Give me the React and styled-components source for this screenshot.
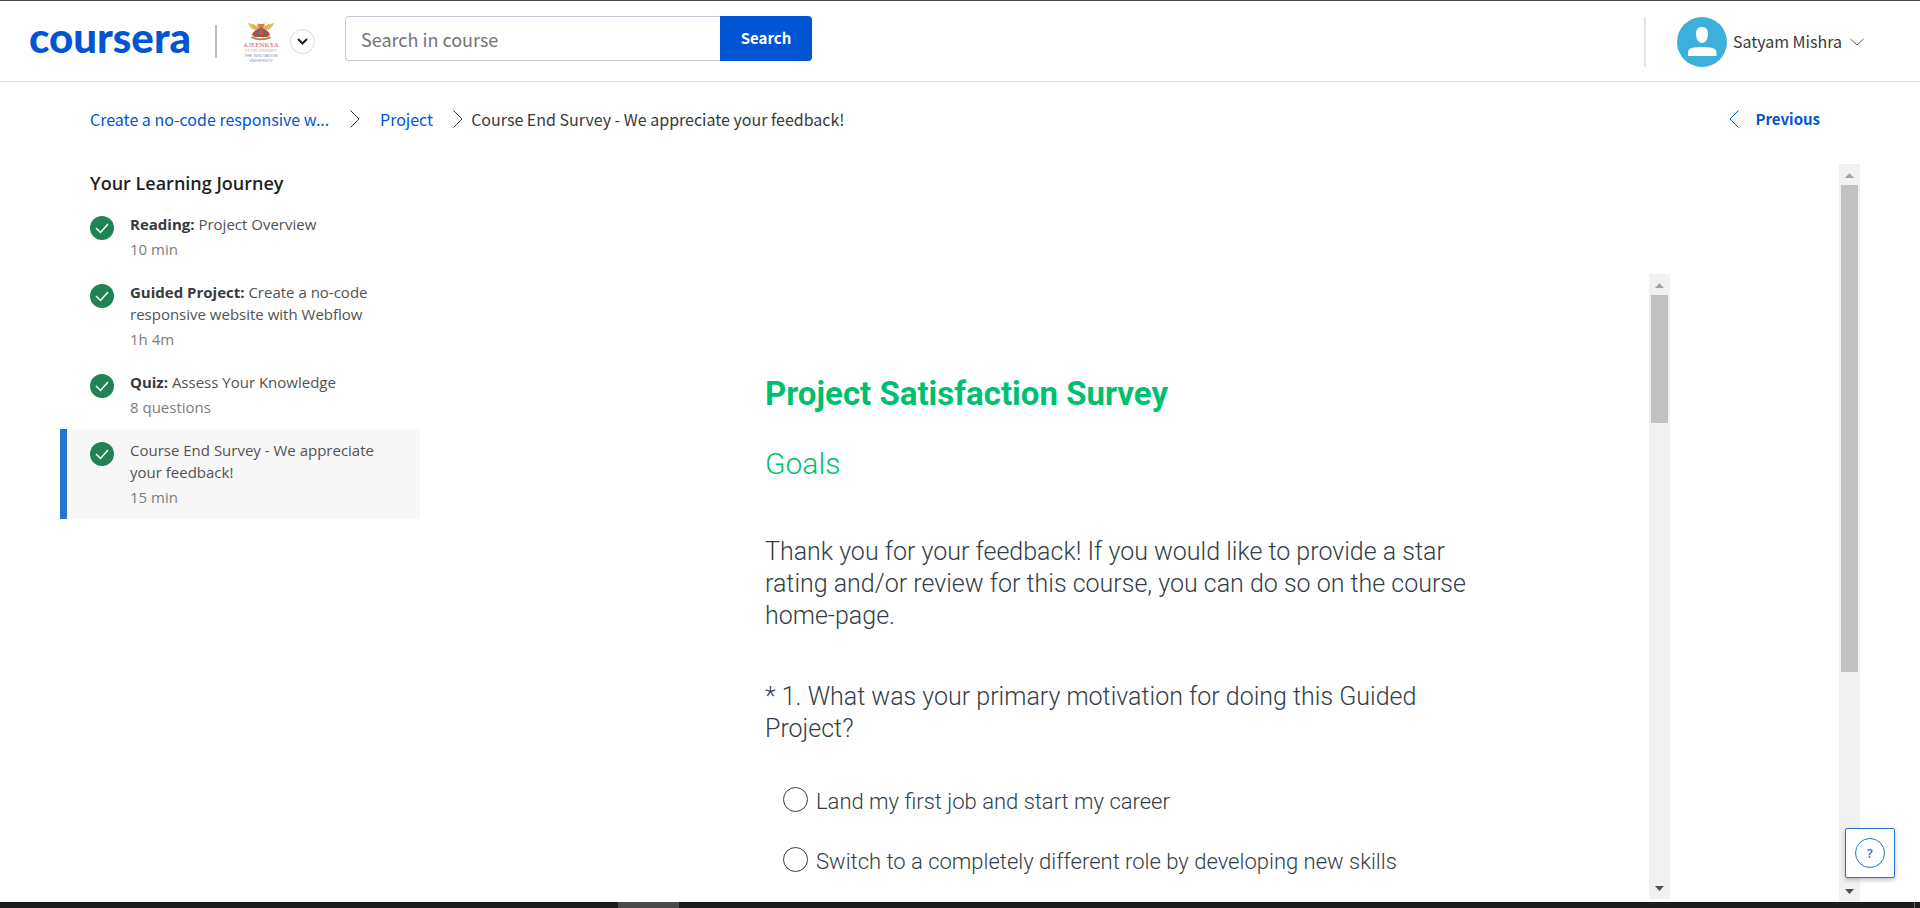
import React from "react";
import styled, { createGlobalStyle } from "styled-components";

const SOURCE = '"Noto Sans CJK SC", "Noto Sans", sans-serif';
const OPEN = '"Open Sans", "Noto Sans", sans-serif';
const SURVEY = 'Roboto, "Liberation Sans", sans-serif';

const GlobalStyle = createGlobalStyle`
  *, *::before, *::after { box-sizing: border-box; }
  body { margin: 0; background: #fff; font-family: ${SOURCE}; color: #373a3c; }
  h1, h2, h3, p, ul, ol, fieldset { margin: 0; padding: 0; border: 0; }
  ul, ol { list-style: none; }
  a { text-decoration: none; color: inherit; }
  button, input { font: inherit; }
`;

const Page = styled.div`
  display: flex;
  flex-direction: column;
  height: 100vh;
  overflow: hidden;
  border-top: 1px solid #48484a;
`;

const Header = styled.header`
  display: flex;
  flex: none;
  height: 81px;
  padding: 0 56px 0 29px;
  border-bottom: 1px solid #dfe0e1;
`;

const Brand = styled.a`
  align-self: flex-start;
  width: 160px;
  margin: 12px 26px 0 0;
  font-family: Lato, sans-serif;
  font-weight: 900;
  font-size: 42px;
  line-height: 48px;
  color: #0056d2;
`;

const Rule = styled.span`
  flex: none;
  width: 2px;
  height: ${(p) => p.$height}px;
  margin-top: ${(p) => p.$top}px;
  background: ${(p) => p.$color};
`;

const Crest = styled.svg`
  flex: none;
  width: 36px;
  height: 42px;
  margin: 20px 0 0 26px;
`;

const RoundButton = styled.button`
  display: flex;
  align-items: center;
  justify-content: center;
  flex: none;
  width: 25px;
  height: 25px;
  margin: 28px 0 0 11px;
  padding: 0;
  border: 1px solid #dadada;
  border-radius: 50%;
  background: #fff;
`;

const SearchForm = styled.form`
  display: flex;
  flex: none;
  width: 467px;
  height: 45px;
  margin: 15px auto 0 30px;
`;

const SearchInput = styled.input`
  flex: 1;
  min-width: 0;
  padding: 0 15px;
  border: 1px solid #c7cbd8;
  border-right: 0;
  border-radius: 4px 0 0 4px;
  font-size: 18px;
  outline: 0;
  &::placeholder { color: #757575; opacity: 1; }
`;

const SearchButton = styled.button`
  width: 92px;
  padding: 0 0 3px;
  border: 0;
  border-radius: 0 4px 4px 0;
  background: #0056d2;
  color: #fff;
  font-weight: 700;
  font-size: 15px;
`;

const UserMenu = styled.button`
  display: flex;
  align-items: center;
  height: 50px;
  margin: 16px 0 0 31px;
  padding: 0;
  border: 0;
  background: none;
  color: #373a3c;
  font-size: 16px;
  line-height: 24px;
`;

const UserName = styled.span`
  margin: 0 8px 2px 6px;
`;

const TopRow = styled.div`
  display: flex;
  flex: none;
  align-items: center;
  justify-content: space-between;
  height: 82px;
  padding: 0 100px 8px 90px;
`;

const Crumbs = styled.ol`
  display: flex;
  align-items: center;
  font-size: 16px;
  line-height: 24px;
`;

const Crumb = styled.li`
  display: flex;
  align-items: center;
`;

const CrumbLink = styled.a`
  min-width: ${(p) => p.$min}px;
  white-space: nowrap;
  color: #0056d2;
`;

const CrumbArrow = styled.svg`
  flex: none;
  width: 10px;
  height: 18px;
  margin: 0 ${(p) => p.$after}px 0 20px;
`;

const PreviousLink = styled.a`
  display: flex;
  align-items: center;
  gap: 16px;
  color: #0056d2;
  font-weight: 700;
  font-size: 15px;
  line-height: 24px;
`;

const Body = styled.div`
  display: flex;
  flex: 1;
  min-height: 0;
  padding: 0 60px;
`;

const Sidebar = styled.nav`
  flex: none;
  width: 360px;
  font-family: ${OPEN};
`;

const SidebarTitle = styled.h2`
  padding: 0 0 1px 30px;
  font-size: 18px;
  font-weight: 600;
  line-height: 38px;
  color: #1f1f1f;
`;

const Step = styled.a`
  display: flex;
  gap: 16px;
  padding: 10px 30px 11px 23px;
  border-left: 7px solid ${(p) => (p.$active ? "#2a73cc" : "transparent")};
  background: ${(p) => (p.$active ? "#f7f7f7" : "transparent")};
  font-size: 15px;
  line-height: 22px;
`;

const StepIcon = styled.svg`
  flex: none;
  width: 24px;
  height: 24px;
  margin-top: 3px;
`;

const StepText = styled.div`
  color: #525252;
  strong { color: #373a3c; font-weight: 700; }
`;

const StepMeta = styled.div`
  margin-top: 3px;
  color: #7d7d7d;
`;

const Main = styled.main`
  display: flex;
  flex: 1;
  min-width: 0;
  padding: 110px 169px 3px;
`;

const Survey = styled.section`
  flex: 1;
  min-width: 0;
  overflow: hidden;
  font-family: ${SURVEY};
  font-weight: 300;
  color: #333e48;
`;

const SurveyInner = styled.div`
  max-width: 708px;
  margin: 0 auto;
  padding-top: 100px;
`;

const SurveyTitle = styled.h1`
  font-size: 33px;
  line-height: 40px;
  font-weight: 700;
  color: #00bf6f;
`;

const SurveySubtitle = styled.h2`
  margin-top: 32px;
  font-size: 30px;
  line-height: 36px;
  font-weight: 300;
  color: #00bf6f;
`;

const Copy = styled.p`
  margin-top: 54px;
  font-size: 25px;
  line-height: 32px;
`;

const Question = styled.fieldset`
  min-width: 0;
  margin-top: 49px;
`;

const Legend = styled.legend`
  padding: 0;
  font-size: 25px;
  line-height: 32px;
`;

const Options = styled.div`
  display: flex;
  flex-direction: column;
  gap: 26px;
  padding: 40px 0 0 18px;
`;

const Option = styled.label`
  display: flex;
  align-items: flex-start;
  gap: 8px;
  font-size: 22px;
  line-height: 34px;
`;

const Radio = styled.input`
  appearance: none;
  flex: none;
  width: 25px;
  height: 25px;
  margin: 2px 0 0;
  border: 1px solid #333e48;
  border-radius: 50%;
  background: #fff;
`;

const Track = styled.div`
  display: flex;
  flex-direction: column;
  flex: none;
  width: 21px;
  background: #f1f1f1;
`;

const TrackEnd = styled.svg`
  flex: none;
  width: 21px;
  height: 21px;
`;

const TrackBody = styled.div`
  flex: 1;
  min-height: 0;
  padding: 0 2px;
`;

const Thumb = styled.div`
  height: ${(p) => p.$size}%;
  background: #c1c1c1;
`;

const HelpButton = styled.button`
  position: fixed;
  right: 25px;
  bottom: 30px;
  display: flex;
  align-items: center;
  justify-content: center;
  width: 50px;
  height: 50px;
  padding: 0;
  border: 1px solid #2a73cc;
  border-radius: 2px;
  background: #fff;
  box-shadow: 0 2px 4px rgba(0, 0, 0, 0.25);
`;

const HelpMark = styled.span`
  width: 30px;
  height: 30px;
  border: 1px solid #2a73cc;
  border-radius: 50%;
  color: #2a73cc;
  font-family: ${OPEN};
  font-weight: 600;
  font-size: 13px;
  line-height: 28px;
`;

const BottomBar = styled.footer`
  display: flex;
  flex: none;
  height: 6px;
  padding: 0 5px 0 618px;
  justify-content: space-between;
  background: #1c1c1c;
`;

const BarTab = styled.span`
  width: 61px;
  background: #4a4a4a;
`;

const BarEdge = styled.span`
  width: 1px;
  background: #6a6a6a;
`;

const steps = [
  { kind: "Reading:", title: "Project Overview", meta: "10 min" },
  { kind: "Guided Project:", title: "Create a no-code responsive website with Webflow", meta: "1h 4m" },
  { kind: "Quiz:", title: "Assess Your Knowledge", meta: "8 questions" },
  { title: "Course End Survey - We appreciate your feedback!", meta: "15 min", active: true },
];

const options = [
  "Land my first job and start my career",
  "Switch to a completely different role by developing new skills",
];

function ScrollTrack({ size }) {
  return (
    <Track aria-hidden="true">
      <TrackEnd viewBox="0 0 21 21">
        <path d="M6 14h9L10.500 9z" fill="#a3a3a3" />
      </TrackEnd>
      <TrackBody>
        <Thumb $size={size} />
      </TrackBody>
      <TrackEnd viewBox="0 0 21 21">
        <path d="M6 8h9L10.500 13z" fill="#505050" />
      </TrackEnd>
    </Track>
  );
}

function UniversityCrest() {
  return (
    <Crest viewBox="0 0 36 42" role="img" aria-label="Ajeenkya D Y Patil University">
      <path d="M5 2c3 0 5 2 8 3l2-3 3 2 3-2 2 3c3-1 5-3 8-3-1 4-4 7-9 8H14C9 9 6 6 5 2z" fill="#eec06e" />
      <path d="M8 4l6 4M28 4l-6 4M10 3l5 5M26 3l-5 5" stroke="#d99a4a" fill="none" />
      <path d="M15 3h6l-1 5h-4z" fill="#d8793f" />
      <path d="M9 14c1-4 5-6 9-6s8 2 9 6l-3 2H12z" fill="#a8513f" />
      <circle cx="18" cy="11" r="4" fill="#4d6d8c" />
      <path d="M16 8h4v6h-4z" fill="#d94b42" />
      <path d="M9 15c5 3 13 3 18 0l1 2c-6 3-14 3-20 0z" fill="#b98755" />
      <text x="18" y="26" textAnchor="middle" fontFamily="Liberation Serif, serif" fontSize="7" fill="#cf6660">AJEENKYA</text>
      <text x="18" y="31" textAnchor="middle" fontFamily="Liberation Serif, serif" fontSize="3" fill="#dd9a94">D Y PATIL UNIVERSITY</text>
      <text x="18" y="36" textAnchor="middle" fontFamily="Liberation Sans, sans-serif" fontSize="4" fill="#8290c8">THE INNOVATION</text>
      <text x="18" y="41" textAnchor="middle" fontFamily="Liberation Sans, sans-serif" fontSize="4" fill="#8290c8">UNIVERSITY</text>
    </Crest>
  );
}

export default function App() {
  return (
    <Page>
      <GlobalStyle />
      <Header>
        <Brand href="#home">coursera</Brand>
        <Rule $height={33} $top={24} $color="#bbbbbb" />
        <UniversityCrest />
        <RoundButton type="button" aria-label="Switch program">
          <svg width="13" height="13" viewBox="0 0 13 13">
            <path d="M2 4l4.500 4.500L11 4" fill="none" stroke="#1f1f1f" strokeWidth="2" />
          </svg>
        </RoundButton>
        <SearchForm role="search" onSubmit={(e) => e.preventDefault()}>
          <SearchInput type="text" placeholder="Search in course" aria-label="Search in course" />
          <SearchButton type="submit">Search</SearchButton>
        </SearchForm>
        <Rule $height={50} $top={16} $color="#e1e1e1" />
        <UserMenu type="button">
          <svg width="50" height="50" viewBox="0 0 50 50" aria-hidden="true">
            <circle cx="25" cy="25" r="25" fill="#3cafda" />
            <path d="M25 10c4 0 6 2.500 6 7 0 5-2.500 9-6 9s-6-4-6-9c0-4.500 2-7 6-7z" fill="#fff" />
            <path d="M11 39v-3c0-4 2-5 6-5.500 5-.7 11-.7 16 0 4 .5 6.500 1.500 6.500 5.500v3z" fill="#fff" />
          </svg>
          <UserName>Satyam Mishra</UserName>
          <svg width="14" height="8" viewBox="0 0 14 8" aria-hidden="true">
            <path d="M.5 1L7 7l6.500-6" fill="none" stroke="#5a5a5a" />
          </svg>
        </UserMenu>
      </Header>

      <TopRow>
        <Crumbs>
          <Crumb>
            <CrumbLink href="#course" $min={240}>Create a no-code responsive w...</CrumbLink>
            <CrumbArrow $after={20} viewBox="0 0 10 18" aria-hidden="true">
              <path d="M.5.5L9 9 .5 17.500" fill="none" stroke="#373a3c" />
            </CrumbArrow>
          </Crumb>
          <Crumb>
            <CrumbLink href="#project" $min={52}>Project</CrumbLink>
            <CrumbArrow $after={8} viewBox="0 0 10 18" aria-hidden="true">
              <path d="M.5.5L9 9 .5 17.500" fill="none" stroke="#373a3c" />
            </CrumbArrow>
          </Crumb>
          <Crumb aria-current="page">Course End Survey - We appreciate your feedback!</Crumb>
        </Crumbs>
        <PreviousLink href="#previous">
          <svg width="10" height="18" viewBox="0 0 10 18" aria-hidden="true">
            <path d="M9.500.5L1 9l8.500 8.500" fill="none" stroke="#0056d2" />
          </svg>
          Previous
        </PreviousLink>
      </TopRow>

      <Body>
        <Sidebar aria-label="Your Learning Journey">
          <SidebarTitle>Your Learning Journey</SidebarTitle>
          <ul>
            {steps.map((step) => (
              <li key={step.title}>
                <Step href="#step" $active={step.active}>
                  <StepIcon viewBox="0 0 24 24" aria-hidden="true">
                    <circle cx="12" cy="12" r="12" fill="#1f8354" />
                    <path d="M6 12l4.500 4.500L18 8" fill="none" stroke="#fff" strokeWidth="1.500" />
                  </StepIcon>
                  <StepText>
                    {step.kind && <strong>{step.kind} </strong>}
                    {step.title}
                    <StepMeta>{step.meta}</StepMeta>
                  </StepText>
                </Step>
              </li>
            ))}
          </ul>
        </Sidebar>

        <Main>
          <Survey>
            <SurveyInner>
              <SurveyTitle>Project Satisfaction Survey</SurveyTitle>
              <SurveySubtitle>Goals</SurveySubtitle>
              <Copy>
                Thank you for your feedback! If you would like to provide a star rating and/or review
                for this course, you can do so on the course home-page.
              </Copy>
              <Question>
                <Legend>* 1. What was your primary motivation for doing this Guided Project?</Legend>
                <Options>
                  {options.map((label) => (
                    <Option key={label}>
                      <Radio type="radio" name="motivation" />
                      {label}
                    </Option>
                  ))}
                </Options>
              </Question>
            </SurveyInner>
          </Survey>
          <ScrollTrack size={22} />
        </Main>
        <ScrollTrack size={70} />
      </Body>

      <BottomBar>
        <BarTab />
        <BarEdge />
      </BottomBar>
      <HelpButton type="button" aria-label="Help">
        <HelpMark>?</HelpMark>
      </HelpButton>
    </Page>
  );
}
